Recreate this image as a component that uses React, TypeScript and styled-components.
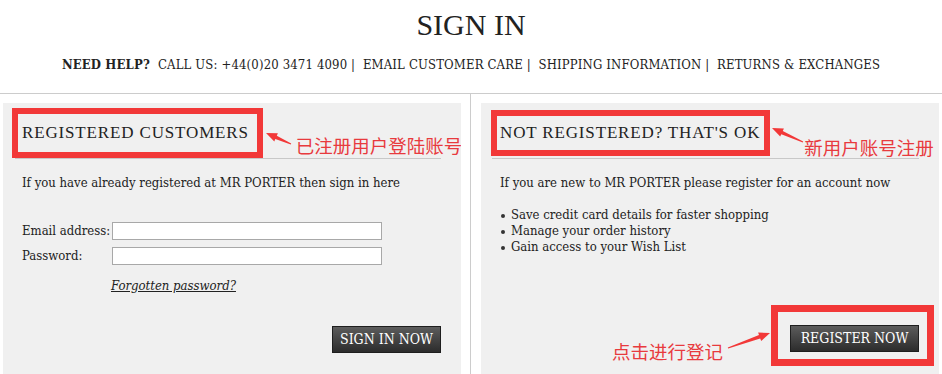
import React from 'react';
import styled, { createGlobalStyle } from 'styled-components';

const GlobalStyle = createGlobalStyle`
  html, body {
    margin: 0;
    padding: 0;
    background: #ffffff;
  }
  body {
    width: 942px;
    height: 374px;
    overflow: hidden;
    font-family: 'DejaVu Serif Condensed', 'DejaVu Serif', 'Liberation Serif', serif;
    color: #222222;
  }
`;

const RED = '#f23838';

export const Page = styled.div`
  width: 942px;
  height: 374px;
  overflow: hidden;
`;

export const Title = styled.h1`
  margin: 7px 0 0;
  text-align: center;
  font-family: 'Liberation Serif', serif;
  font-weight: normal;
  font-size: 30px;
  line-height: 36px;
  color: #222222;
`;

export const HelpBar = styled.div`
  display: flex;
  justify-content: center;
  margin-top: 14px;
  font-size: 13px;
  line-height: 16px;
  letter-spacing: 0.15px;
  white-space: pre;
`;

export const HelpLabel = styled.b`
  margin-right: 8px;
`;

export const Columns = styled.div`
  box-sizing: border-box;
  display: grid;
  grid-template-columns: 458px 1px 459px;
  column-gap: 9px;
  padding-left: 3px;
  margin-top: 20px;
  border-top: 1px solid #cccccc;
  height: 281px;
`;

export const Rule = styled.div`
  background: #cccccc;
`;

export const Panel = styled.section<{ $shift?: number }>`
  margin-top: 9px;
  margin-left: ${(p) => p.$shift || 0}px;
  background: #f0f0f0;
  overflow: hidden;
`;

export const HeadRow = styled.div<{ $left: number }>`
  box-sizing: border-box;
  display: flex;
  align-items: flex-start;
  height: 56px;
  margin: 0 20px 0 ${(p) => p.$left}px;
  padding: 22px 0 0 ${(p) => 19 - p.$left}px;
  border-bottom: 1px solid #c8c8c8;
`;

export const Heading = styled.h2<{ $track: number }>`
  position: relative;
  margin: 0;
  font-family: 'Liberation Serif', serif;
  font-weight: normal;
  font-size: 17px;
  line-height: 16px;
  letter-spacing: ${(p) => p.$track}px;
  color: #222222;
  white-space: nowrap;
`;

export const Frame = styled.span<{ $t: number; $r: number; $b: number; $l: number; $w: number }>`
  position: absolute;
  top: ${(p) => -p.$t}px;
  right: ${(p) => -p.$r}px;
  bottom: ${(p) => -p.$b}px;
  left: ${(p) => -p.$l}px;
  border: ${(p) => p.$w}px solid ${RED};
  pointer-events: none;
`;

export const Note = styled.span<{ $top?: number; $left?: number }>`
  display: block;
  margin-top: ${(p) => p.$top || 0}px;
  margin-left: ${(p) => p.$left || 0}px;
  font-family: 'Noto Sans CJK SC', sans-serif;
  font-size: 18.5px;
  line-height: 20px;
  color: #e83a3e;
  white-space: nowrap;
`;

export const NoteGroup = styled.div<{ $gap: number; $drop: number }>`
  display: flex;
  align-items: flex-start;
  margin-left: ${(p) => p.$gap}px;
  margin-top: ${(p) => p.$drop}px;
`;

export const Body = styled.div`
  padding: 0 20px 0 19px;
  font-size: 13px;
  line-height: 16px;
`;

export const Intro = styled.p`
  margin: 16px 0 0;
  white-space: nowrap;
`;

export const Form = styled.div`
  display: grid;
  grid-template-columns: 90px 270px;
  row-gap: 7px;
  margin-top: 31px;
  align-items: center;
`;

export const Label = styled.label`
  white-space: nowrap;
`;

export const Input = styled.input`
  box-sizing: border-box;
  width: 270px;
  height: 18px;
  margin: 0;
  border: 1px solid #a8a8a8;
  background: #ffffff;
`;

export const Forgot = styled.a`
  display: block;
  margin: 13px 0 0 89px;
  font-style: italic;
  text-decoration: underline;
  color: #222222;
`;

export const Bullets = styled.ul`
  list-style: none;
  margin: 16px 0 0;
  padding: 0;

  li {
    position: relative;
    padding-left: 11px;
  }
  li::before {
    content: '';
    position: absolute;
    left: 1px;
    top: 7px;
    width: 4px;
    height: 4px;
    border-radius: 50%;
    background: #333333;
  }
`;

export const Footer = styled.div<{ $top: number }>`
  display: flex;
  justify-content: flex-end;
  align-items: flex-start;
  margin-top: ${(p) => p.$top}px;
`;

export const ButtonWrap = styled.div`
  position: relative;
  margin-left: 19px;
`;

export const Button = styled.button<{ $w: number }>`
  box-sizing: border-box;
  width: ${(p) => p.$w}px;
  height: 27px;
  padding: 0;
  border: 1px solid #1e1e1e;
  background: linear-gradient(#5c5c5c, #2c2c2c);
  color: #ffffff;
  font-family: inherit;
  font-size: 14px;
  line-height: 25px;
  cursor: pointer;
`;

const Arrow: React.FC<{ w: number; h: number; x1: number; y1: number; x2: number; y2: number }> = ({
  w, h, x1, y1, x2, y2,
}) => {
  const dx = x2 - x1;
  const dy = y2 - y1;
  const len = Math.hypot(dx, dy);
  const ux = dx / len;
  const uy = dy / len;
  const nx = -uy;
  const ny = ux;
  const head = 11;
  const hx = x2 - ux * head;
  const hy = y2 - uy * head;
  const pts = [
    [x1 + nx * 0.6, y1 + ny * 0.6],
    [hx + nx * 1.8, hy + ny * 1.8],
    [hx + nx * 4.5, hy + ny * 4.5],
    [x2, y2],
    [hx - nx * 4.5, hy - ny * 4.5],
    [hx - nx * 1.8, hy - ny * 1.8],
    [x1 - nx * 0.6, y1 - ny * 0.6],
  ]
    .map((p) => p.map((v) => v.toFixed(1)).join(','))
    .join(' ');
  return (
    <svg width={w} height={h} viewBox={`0 0 ${w} ${h}`} style={{ display: 'block', flex: 'none' }}>
      <polygon points={pts} fill={RED} />
    </svg>
  );
};

export default function App() {
  return (
    <Page>
      <GlobalStyle />
      <Title>SIGN IN</Title>
      <HelpBar>
        <HelpLabel>NEED HELP?</HelpLabel>
        {'CALL US: +44(0)20 3471 4090 |  EMAIL CUSTOMER CARE |  SHIPPING INFORMATION |  RETURNS & EXCHANGES'}
      </HelpBar>

      <Columns>
        <Panel>
          <HeadRow $left={12}>
            <Heading $track={0.85}>
              REGISTERED CUSTOMERS
              <Frame $t={17} $r={14} $b={17} $l={10} $w={6} />
            </Heading>
            <NoteGroup $gap={16} $drop={7}>
              <Arrow w={28} h={14} x1={26} y1={12} x2={1} y2={1} />
              <Note $top={3} $left={3}>已注册用户登陆账号</Note>
            </NoteGroup>
          </HeadRow>
          <Body>
            <Intro>If you have already registered at MR PORTER then sign in here</Intro>
            <Form>
              <Label htmlFor="email">Email address:</Label>
              <Input id="email" type="text" />
              <Label htmlFor="password">Password:</Label>
              <Input id="password" type="password" />
            </Form>
            <Forgot href="#">Forgotten password?</Forgot>
            <Footer $top={32}>
              <Button $w={109}>SIGN IN NOW</Button>
            </Footer>
          </Body>
        </Panel>

        <Rule />

        <Panel $shift={1}>
          <HeadRow $left={11}>
            <Heading $track={0.85}>
              NOT REGISTERED? THAT'S OK
              <Frame $t={15} $r={10} $b={15} $l={9} $w={6} />
            </Heading>
            <NoteGroup $gap={11} $drop={2}>
              <Arrow w={33} h={16} x1={32} y1={15} x2={1} y2={1} />
              <Note $top={10}>新用户账号注册</Note>
            </NoteGroup>
          </HeadRow>
          <Body>
            <Intro>If you are new to MR PORTER please register for an account now</Intro>
            <Bullets>
              <li>Save credit card details for faster shopping</li>
              <li>Manage your order history</li>
              <li>Gain access to your Wish List</li>
            </Bullets>
            <Footer $top={70}>
              <Note $top={16}>点击进行登记</Note>
              <NoteGroup $gap={4} $drop={7}>
                <Arrow w={44} h={17} x1={1} y1={16} x2={43} y2={1} />
              </NoteGroup>
              <ButtonWrap>
                <Button $w={129}>REGISTER NOW</Button>
                <Frame $t={20} $r={15} $b={14} $l={19} $w={7} />
              </ButtonWrap>
            </Footer>
          </Body>
        </Panel>
      </Columns>
    </Page>
  );
}
